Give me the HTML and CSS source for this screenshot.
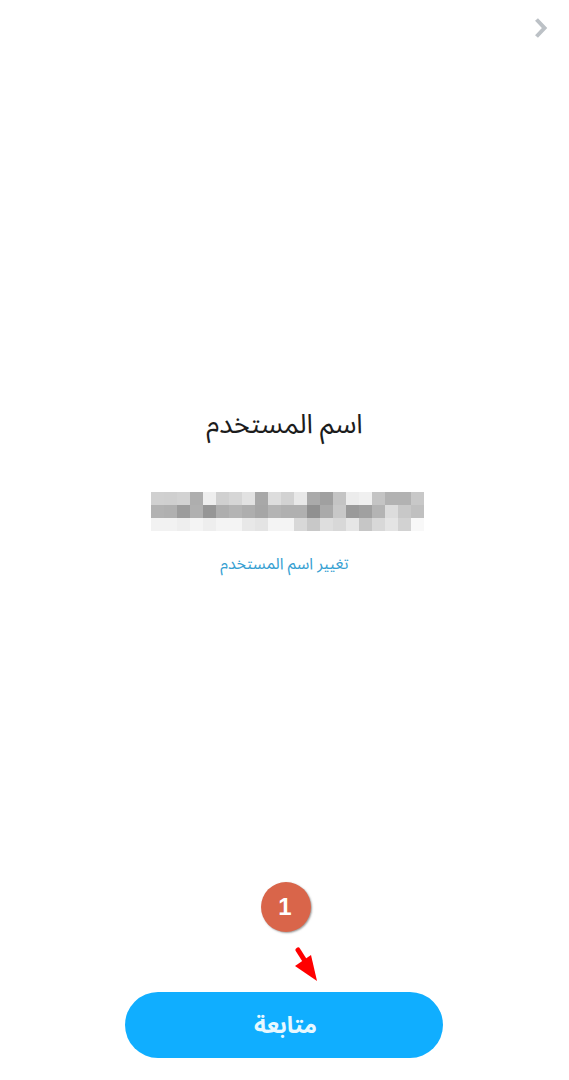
FILE: index.html
```html
<!DOCTYPE html>
<html lang="ar" dir="rtl">
<head>
<meta charset="utf-8">
<title>اسم المستخدم</title>
<link rel="stylesheet" href="styles.css">
</head>
<body>
<div class="screen">
  <header class="topbar">
    <svg class="chevron" width="14" height="20" viewBox="0 0 14 20"><path d="M2.5 1.5 L10.5 10 L2.5 18.5" fill="none" stroke="#bcc1c6" stroke-width="4"/></svg>
  </header>
  <main class="content">
    <h1 class="title">اسم المستخدم</h1>
    <div class="mosaic" aria-hidden="true">
      <i class="g-d0"></i><i class="g-cf"></i><i class="g-d2"></i><i class="g-ae"></i><i class="g-ee"></i><i class="g-d0"></i><i class="g-d6"></i><i class="g-e2"></i><i class="g-a8"></i><i class="g-dd"></i><i class="g-d2"></i><i class="g-e8"></i><i class="g-aa"></i><i class="g-a0"></i><i class="g-c4"></i><i class="g-ec"></i><i class="g-f0"></i><i class="g-c4"></i><i class="g-b2"></i><i class="g-b2"></i><i class="g-c8"></i>
      <i class="g-b2"></i><i class="g-b0"></i><i class="g-9c"></i><i class="g-b0"></i><i class="g-96"></i><i class="g-ae"></i><i class="g-b4"></i><i class="g-ae"></i><i class="g-a6"></i><i class="g-b4"></i><i class="g-b0"></i><i class="g-b0"></i><i class="g-90"></i><i class="g-aa"></i><i class="g-c8"></i><i class="g-9a"></i><i class="g-a0"></i><i class="g-b4"></i><i class="g-dc"></i><i class="g-c8"></i><i class="g-c0"></i>
      <i class="g-f2"></i><i class="g-f2"></i><i class="g-ee"></i><i class="g-f4"></i><i class="g-ee"></i><i class="g-f4"></i><i class="g-f4"></i><i class="g-e8"></i><i class="g-e4"></i><i class="g-f4"></i><i class="g-f4"></i><i class="g-d8"></i><i class="g-c8"></i><i class="g-de"></i><i class="g-d8"></i><i class="g-e6"></i><i class="g-c6"></i><i class="g-d8"></i><i class="g-e4"></i><i class="g-d2"></i><i class="g-f8"></i>
    </div>
    <a class="change-link" href="#">تغيير اسم المستخدم</a>
  </main>
  <footer class="actions">
    <div class="step-badge">1</div>
    <svg class="step-arrow" width="30" height="40" viewBox="0 0 30 40"><path d="M4 4 L11 15" stroke="#ff0000" stroke-width="5" stroke-linecap="round"/><path d="M23 35 L1 20 L17 9 Z" fill="#ff0000"/></svg>
    <button class="primary" type="button">متابعة</button>
  </footer>
</div>
</body>
</html>
```
FILE: styles.css
```css
* { box-sizing: border-box; }
html, body { margin: 0; padding: 0; background: #fff; }
.screen {
  position: relative;
  width: 569px;
  height: 1080px;
  display: flex;
  flex-direction: column;
  align-items: center;
  font-family: "Noto Sans Arabic", "DejaVu Sans", sans-serif;
  overflow: hidden;
}
.topbar {
  width: 100%;
  height: 60px;
  padding: 18px 21px 0;
  direction: ltr;
  display: flex;
  justify-content: flex-end;
  flex: none;
}
.chevron { display: block; }
.content {
  flex: 1;
  display: flex;
  flex-direction: column;
  align-items: center;
  padding-top: 345px;
}
.title {
  margin: 0;
  font-size: 27px;
  line-height: 40px;
  font-weight: 400;
  color: #1c1c1c;
}
.mosaic {
  margin-top: 47px;
  margin-left: 6px;
  display: grid;
  direction: ltr;
  grid-template-columns: repeat(21, 13px);
  grid-auto-rows: 13px;
}
.change-link {
  margin-top: 21px;
  font-size: 16px;
  line-height: 24px;
  color: #36a0d2;
  text-decoration: none;
}
.actions {
  position: relative;
  flex: none;
  width: 100%;
  height: 88px;
  display: flex;
  justify-content: center;
}
.primary {
  width: 318px;
  height: 66px;
  margin-right: 2px;
  padding: 0 0 0 4px;
  border: 0;
  border-radius: 33px;
  background: #10aeff;
  color: #e8f8ff;
  font-family: inherit;
  font-size: 23px;
  font-weight: 700;
}
.step-badge {
  position: absolute;
  left: 261px;
  top: -110px;
  width: 50px;
  height: 50px;
  padding-right: 2px;
  border-radius: 50%;
  background: #d9654a;
  box-shadow: 1px 1px 2px rgba(90, 90, 90, .6);
  color: #fff;
  font: 700 24px/50px "Liberation Sans", sans-serif;
  text-align: center;
}
.step-arrow {
  position: absolute;
  left: 294px;
  top: -46px;
}
.g-90 { background: #909090; } .g-96 { background: #969696; } .g-9a { background: #9a9a9a; } .g-9c { background: #9c9c9c; }
.g-a0 { background: #a0a0a0; } .g-a6 { background: #a6a6a6; } .g-a8 { background: #a8a8a8; } .g-aa { background: #aaaaaa; }
.g-ae { background: #aeaeae; } .g-b0 { background: #b0b0b0; } .g-b2 { background: #b2b2b2; } .g-b4 { background: #b4b4b4; }
.g-c0 { background: #c0c0c0; } .g-c4 { background: #c4c4c4; } .g-c6 { background: #c6c6c6; } .g-c8 { background: #c8c8c8; }
.g-cf { background: #cfcfcf; } .g-d0 { background: #d0d0d0; } .g-d2 { background: #d2d2d2; } .g-d6 { background: #d6d6d6; }
.g-d8 { background: #d8d8d8; } .g-dc { background: #dcdcdc; } .g-dd { background: #dddddd; } .g-de { background: #dedede; }
.g-e2 { background: #e2e2e2; } .g-e4 { background: #e4e4e4; } .g-e6 { background: #e6e6e6; } .g-e8 { background: #e8e8e8; }
.g-ec { background: #ececec; } .g-ee { background: #eeeeee; } .g-f0 { background: #f0f0f0; } .g-f2 { background: #f2f2f2; }
.g-f4 { background: #f4f4f4; } .g-f8 { background: #f8f8f8; }
```
